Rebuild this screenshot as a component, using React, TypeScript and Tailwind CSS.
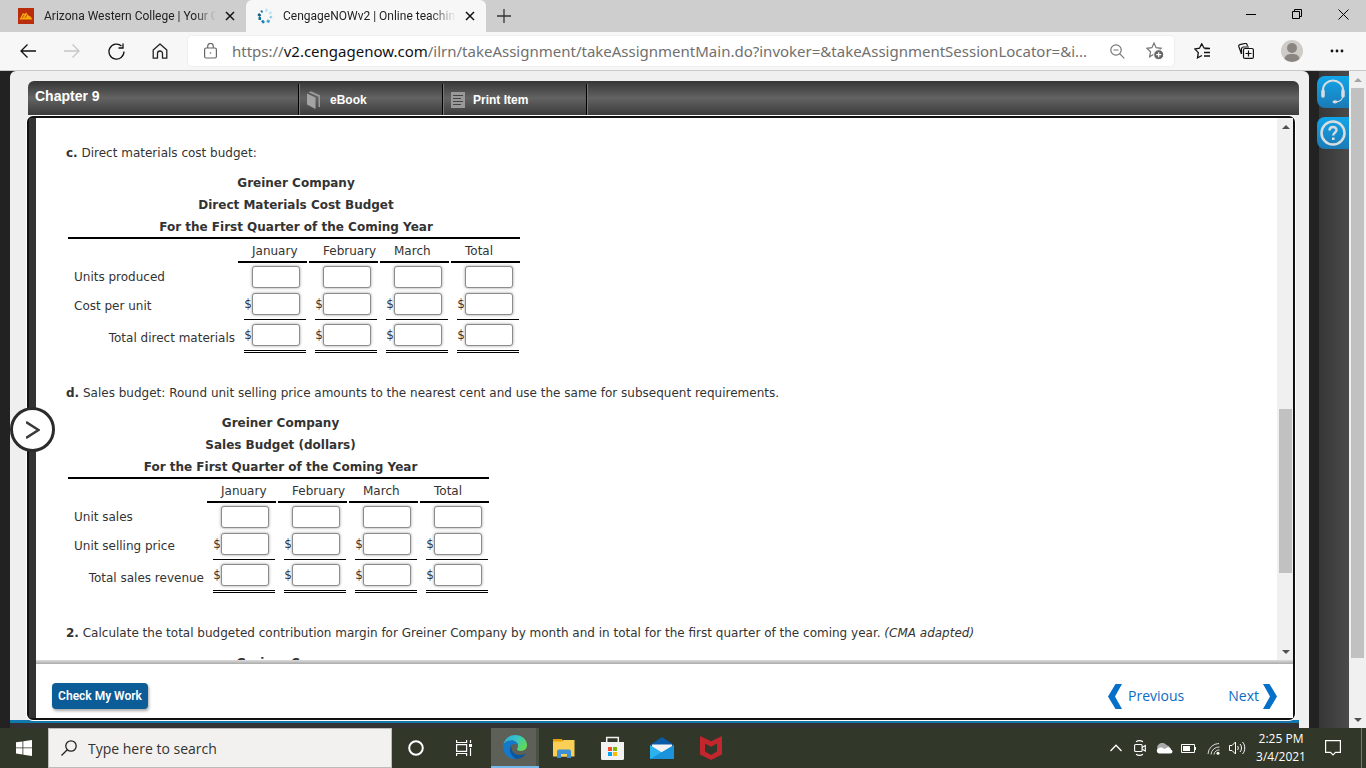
import React from 'react';

const MONTHS = ['January', 'February', 'March', 'Total'];

interface BudgetRow {
  label: string;
  dollar?: boolean;
  kind: 'plain' | 'subtotal' | 'total';
}

interface BudgetTableProps {
  title: string;
  labelWidth: string;
  rows: BudgetRow[];
}

const CELL_STYLES = {
  plain: 'pt-[3px] pb-0.5',
  subtotal: 'pt-[3px] pb-1 border-b border-black',
  total: 'py-1 border-b-[3px] border-double border-black',
};

const LABEL_STYLES = {
  plain: 'text-left pl-1.5',
  subtotal: 'text-left pl-1.5 pt-0.5',
  total: 'text-right pr-px pt-0.5',
};

function BudgetTable({ title, labelWidth, rows }: BudgetTableProps) {
  return (
    <table className="mt-2 border-separate border-spacing-x-0.5 border-spacing-y-0 table-fixed w-max">
      <colgroup>
        <col className={labelWidth} />
        {MONTHS.map((m) => (
          <col key={m} className="w-[69px]" />
        ))}
      </colgroup>
      <thead>
        <tr>
          <th colSpan={5} className="p-0 pl-1 border-b-2 border-black text-center font-bold leading-[22px]">
            <div className="h-[65px]">
              <div>Greiner Company</div>
              <div>{title}</div>
              <div>For the First Quarter of the Coming Year</div>
            </div>
          </th>
        </tr>
        <tr>
          <td className="p-0" />
          {MONTHS.map((m) => (
            <th key={m} scope="col" className="p-0 pt-0.5 pl-3.5 border-b-2 border-black text-left font-normal leading-5">
              {m}
            </th>
          ))}
        </tr>
      </thead>
      <tbody>
        {rows.map((row) => (
          <tr key={row.label}>
            <th scope="row" className={`p-0 font-normal whitespace-nowrap ${LABEL_STYLES[row.kind]}`}>
              {row.label}
            </th>
            {MONTHS.map((m) => (
              <td key={m} className="p-0 pl-1.5 pr-px align-top">
                <label className={`flex items-center ${CELL_STYLES[row.kind]}`}>
                  <span className="w-2 text-right leading-[22px]">{row.dollar ? '$' : ''}</span>
                  <input
                    type="text"
                    aria-label={`${row.label} ${m}`}
                    className="w-12 h-[22px] px-1 bg-white border border-[#8c8c8c] rounded-[3px] shadow-[0_0_3px_#999] outline-none"
                  />
                </label>
              </td>
            ))}
          </tr>
        ))}
      </tbody>
    </table>
  );
}

function CloseX({ size = 10 }: { size?: number }) {
  return (
    <svg width={size} height={size} viewBox="0 0 10 10" stroke="#111" strokeWidth="1.5" fill="none">
      <path d="M1 1l8 8M9 1L1 9" />
    </svg>
  );
}

function TabStrip() {
  return (
    <header className="h-8 shrink-0 flex bg-[#cecece] text-xs text-[#222] font-['Roboto','Noto_Sans',sans-serif]">
      <div className="w-[246px] flex items-center pl-[18px] pr-1.5">
        <svg width="16" height="16" viewBox="0 0 16 16" className="shrink-0">
          <rect width="16" height="16" fill="#b92d0c" />
          <path d="M1.5 11.5L5 5l1.500 1L8 4.500l3 3.500 1.500.5 2 3z" fill="#f6a90c" />
          <path d="M4 10l2-3M7 10l2-3.500" stroke="#b92d0c" strokeWidth=".8" />
        </svg>
        <span className="ml-2.5 flex-1 overflow-hidden whitespace-nowrap [mask-image:linear-gradient(to_right,black_88%,transparent)]">
          Arizona Western College | Your C
        </span>
        <button aria-label="Close tab" className="w-5 h-5 ml-1 flex items-center justify-center">
          <CloseX />
        </button>
      </div>
      <div className="w-60 flex items-center pl-[11px] pr-1.5 bg-[#f7f7f7] rounded-t-md">
        <svg width="16" height="16" viewBox="0 0 16 16" className="shrink-0" fill="none" strokeWidth="3">
          <path d="M8.500 2.200L10.500 2.200" stroke="#b5ddf0" />
          <path d="M12.500 3.800L14 6" stroke="#c5e6f5" />
          <path d="M13.200 8.200L14.500 10" stroke="#8ccbe8" strokeWidth="2.500" />
          <path d="M10 12.500L12.500 14" stroke="#4aa6d5" />
          <path d="M5 14.500L7 12.800" stroke="#1583bb" />
          <path d="M1.500 10.500L4 10.500" stroke="#10739f" />
          <path d="M1.200 6L3.500 8" stroke="#0d5f8c" strokeWidth="2.500" />
          <path d="M4 2.500L5.500 4.500" stroke="#2b7fae" strokeWidth="2" />
        </svg>
        <span className="ml-2.5 flex-1 overflow-hidden whitespace-nowrap [mask-image:linear-gradient(to_right,black_85%,transparent)]">
          CengageNOWv2 | Online teachin
        </span>
        <button aria-label="Close tab" className="w-5 h-5 ml-1 flex items-center justify-center">
          <CloseX />
        </button>
      </div>
      <button aria-label="New tab" className="w-9 flex items-center justify-center">
        <svg width="14" height="14" viewBox="0 0 14 14" stroke="#333" strokeWidth="1.300">
          <path d="M7 0v14M0 7h14" />
        </svg>
      </button>
      <div className="ml-auto flex">
        <button aria-label="Minimize" className="w-[46px] flex items-center justify-center pb-1">
          <svg width="10" height="10" viewBox="0 0 10 10" stroke="#000">
            <path d="M0 5.500h10" />
          </svg>
        </button>
        <button aria-label="Restore" className="w-[46px] flex items-center justify-center pb-1">
          <svg width="10" height="10" viewBox="0 0 10 10" stroke="#000" fill="none">
            <path d="M.5 2.500h7v7h-7zM2.500 2.500v-2h7v7h-2" />
          </svg>
        </button>
        <button aria-label="Close" className="w-[46px] flex items-center justify-center pb-1">
          <svg width="11" height="11" viewBox="0 0 11 11" stroke="#000">
            <path d="M.5.5l10 10M10.500.5l-10 10" />
          </svg>
        </button>
      </div>
    </header>
  );
}

function Toolbar() {
  return (
    <nav className="h-[39px] shrink-0 flex items-center bg-[#f7f7f7] border-b border-[#c8c8c8] pl-1.5 pr-[7px]">
      <button aria-label="Back" className="w-11 flex justify-center">
        <svg width="16" height="14" viewBox="0 0 16 14" fill="none" stroke="#111" strokeWidth="1.300">
          <path d="M16 7H1M7.500.5L1 7l6.500 6.500" />
        </svg>
      </button>
      <button aria-label="Forward" className="w-11 flex justify-center">
        <svg width="16" height="14" viewBox="0 0 16 14" fill="none" stroke="#c6c6c6" strokeWidth="1.300">
          <path d="M0 7h15M8.500.5L15 7l-6.500 6.500" />
        </svg>
      </button>
      <button aria-label="Refresh" className="w-11 flex justify-center">
        <svg width="17" height="17" viewBox="0 0 17 17" fill="none" stroke="#111" strokeWidth="1.300">
          <path d="M16 8.500A7.500 7.500 0 1 1 13.500 3M15 .5V5h-4.500" />
        </svg>
      </button>
      <button aria-label="Home" className="w-11 flex justify-center">
        <svg width="16" height="16" viewBox="0 0 16 16" fill="none" stroke="#222" strokeWidth="1.300" strokeLinejoin="round">
          <path d="M1.200 7L8 1l6.800 6v8.200h-4.300V10.500a2.500 2.500 0 0 0-5 0v4.700H1.200z" />
        </svg>
      </button>
      <div className="ml-1.5 flex-1 min-w-0 h-[30px] flex items-center bg-white rounded shadow-[0_0_2px_#ddd] pl-4 pr-2.5">
        <svg width="13" height="16" viewBox="0 0 13 16" fill="none" stroke="#666" strokeWidth="1.200" className="shrink-0">
          <rect x=".6" y="5" width="11.800" height="10" rx="1.500" />
          <path d="M3.700 5V3.200a2.800 2.800 0 0 1 5.600 0V5" />
          <circle cx="6.500" cy="10" r=".8" fill="#666" stroke="none" />
        </svg>
        <div className="ml-[15px] flex-1 min-w-0 whitespace-nowrap text-[15px] text-[#707070] font-['Noto_Sans',sans-serif]">
          https://<span className="text-[#111]">v2.cengagenow.com</span>
          /ilrn/takeAssignment/takeAssignmentMain.do?invoker=&amp;takeAssignmentSessionLocator=&amp;i...
        </div>
        <button aria-label="Zoom out" className="ml-4">
          <svg width="15" height="15" viewBox="0 0 15 15" fill="none" stroke="#777" strokeWidth="1.200">
            <circle cx="6" cy="6" r="5.200" />
            <path d="M3.500 6h5M9.800 9.800l4.500 4.500" />
          </svg>
        </button>
        <button aria-label="Add to favorites" className="ml-[21px]">
          <svg width="18" height="18" viewBox="0 0 18 18" fill="none">
            <path d="M8 1l2.100 4.700 5 .6-3.700 3.400 1 5.100L8 12.300l-4.400 2.500 1-5.100L.9 6.300l5-.6z" stroke="#777" strokeWidth="1.200" />
            <circle cx="12.700" cy="12.700" r="5" fill="#666" stroke="#fff" />
            <path d="M12.700 10.200v5M10.200 12.700h5" stroke="#fff" strokeWidth="1.200" />
          </svg>
        </button>
      </div>
      <button aria-label="Favorites" className="ml-1.5 w-11 flex justify-center">
        <svg width="17" height="16" viewBox="0 0 17 16" fill="none" stroke="#111" strokeWidth="1.300">
          <path d="M15.500 5.500L10 5 7.700.8 5.500 5.200.8 6l3.500 3.600-.8 5.200L8 12.500M10.500 5.500H16M10 9.500h6M10 13h6" />
        </svg>
      </button>
      <button aria-label="Collections" className="w-11 flex justify-center">
        <svg width="16" height="16" viewBox="0 0 16 16" fill="none" stroke="#111" strokeWidth="1.200">
          <path d="M3.500 11L.8 3.500a1.500 1.500 0 0 1 1-1.900L7 .5a1.500 1.500 0 0 1 2 1l.5 1.500M3.500 11V6a2 2 0 0 1 2-2H11" />
          <rect x="5.500" y="5.500" width="9.900" height="9.900" rx="1.500" fill="#f7f7f7" />
          <path d="M10.500 7.500v6M7.500 10.500h6" />
        </svg>
      </button>
      <button aria-label="Profile" className="w-[47px] flex justify-center">
        <svg width="22" height="22" viewBox="0 0 22 22">
          <circle cx="11" cy="11" r="11" fill="#cfccc8" />
          <circle cx="11" cy="8" r="5" fill="#8a8580" />
          <path d="M3.500 19c.5-4 3.500-5 7.500-5s7 1 7.500 5A11 11 0 0 1 3.500 19z" fill="#8a8580" />
        </svg>
      </button>
      <button aria-label="Settings and more" className="w-11 flex justify-center">
        <svg width="14" height="4" viewBox="0 0 14 4" fill="#111">
          <circle cx="2" cy="2" r="1.400" />
          <circle cx="7" cy="2" r="1.400" />
          <circle cx="12" cy="2" r="1.400" />
        </svg>
      </button>
    </nav>
  );
}

function Arrow({ up = false, color = '#505050' }: { up?: boolean; color?: string }) {
  return (
    <span className="h-[17px] shrink-0 flex items-center justify-center">
      <svg width="8" height="4" viewBox="0 0 8 4" fill={color}>
        <path d={up ? 'M0 4l4-4 4 4z' : 'M0 0l4 4 4-4z'} />
      </svg>
    </span>
  );
}

function AssignmentHeader() {
  const divider = 'border-l border-black shadow-[inset_1px_0_0_#777]';
  return (
    <div className="h-[34px] mr-px ml-px shrink-0 flex rounded-t-md bg-linear-to-b from-[#363636] via-[#636363] to-[#3c3c3c] text-white font-bold font-['Liberation_Sans',Arial,sans-serif]">
      <h1 className="w-[270px] pl-[7px] pt-1.5 text-sm leading-[18px]">Chapter 9</h1>
      <button className={`mt-[3px] w-36 flex items-center gap-2.5 pl-2 text-xs ${divider}`}>
        <svg width="13" height="18" viewBox="0 0 13 18">
          <path d="M0 2.500l8.500 4V18L0 13.500z" fill="#a3a3a3" />
          <path d="M1.500 1.500L4 .3l9 4V16h-1.500V5.800L3.500 2.300z" fill="#999" />
        </svg>
        eBook
      </button>
      <button className={`mt-[3px] w-36 flex items-center gap-2 pl-2 text-xs ${divider}`}>
        <svg width="14" height="16" viewBox="0 0 14 16">
          <rect width="14" height="16" fill="#999" />
          <path d="M2 3.500h10M2 6.500h8M2 9.500h10M2 12.500h8" stroke="#444" />
        </svg>
        Print Item
      </button>
      <span className={`mt-[3px] w-2 ${divider}`} />
    </div>
  );
}

function Questions() {
  return (
    <main className="flex-1 min-w-0 overflow-hidden pt-6 pl-[30px] text-xs leading-[22px] text-[#333] font-['DejaVu_Sans',Verdana,sans-serif]">
      <p>
        <b>c.</b> Direct materials cost budget:
      </p>
      <BudgetTable
        title="Direct Materials Cost Budget"
        labelWidth="w-[168px]"
        rows={[
          { label: 'Units produced', kind: 'plain' },
          { label: 'Cost per unit', dollar: true, kind: 'subtotal' },
          { label: 'Total direct materials', dollar: true, kind: 'total' },
        ]}
      />
      <p className="mt-[29px]">
        <b>d.</b> Sales budget: Round unit selling price amounts to the nearest cent and use the same for subsequent
        requirements.
      </p>
      <BudgetTable
        title="Sales Budget (dollars)"
        labelWidth="w-[137px]"
        rows={[
          { label: 'Unit sales', kind: 'plain' },
          { label: 'Unit selling price', dollar: true, kind: 'subtotal' },
          { label: 'Total sales revenue', dollar: true, kind: 'total' },
        ]}
      />
      <p className="mt-[29px]">
        <b>2.</b> Calculate the total budgeted contribution margin for Greiner Company by month and in total for the
        first quarter of the coming year. <i>(CMA adapted)</i>
      </p>
      <div className="mt-2 w-[458px] text-center font-bold">Greiner Company</div>
    </main>
  );
}

function Assignment() {
  return (
    <div className="flex-1 min-w-0 flex flex-col bg-[#efefef] rounded-t-md">
      <div className="flex-1 min-h-0 flex flex-col pt-2.5 pl-[17px] pr-[9px]">
        <AssignmentHeader />
        <div className="relative mr-[5px] flex-1 min-h-0 mt-px flex flex-col bg-white border-2 border-[#111] rounded-md shadow-[0_0_0_1px_#fff]">
          <div className="flex-1 min-h-0 flex border-l-[7px] border-[#333]">
            <Questions />
            <div className="w-4 shrink-0 flex flex-col pl-0.5 bg-[#f0f0f0]" aria-hidden="true">
              <Arrow up />
              <span className="grow-[274]" />
              <span className="grow-[164] mr-px bg-[#c1c1c1]" />
              <span className="grow-[70]" />
              <Arrow />
            </div>
          </div>
          <footer className="shrink-0 border-l-[7px] border-[#333]">
            <div className="h-1 bg-linear-to-b from-[#ddd] to-[#aaa]" />
            <div className="h-[54px] pt-2.5 pl-4 pr-4 flex items-center bg-white font-['Open_Sans',sans-serif]">
              <button className="h-[26px] w-24 rounded bg-[#0b5c97] text-white text-xs font-semibold font-['Roboto',sans-serif] whitespace-nowrap shadow-[1px_2px_3px_#aaa]">
                Check My Work
              </button>
              <a href="#previous" className="ml-auto flex items-center gap-1.5 text-sm text-[#0a6cc4]">
                <svg width="14" height="25" viewBox="0 0 14 25" fill="#0570c9">
                  <path d="M7.500 0H14L7 12.500 14 25H7.500L0 12.500z" />
                </svg>
                Previous
              </a>
              <a href="#next" className="ml-11 flex items-center gap-1 text-sm text-[#0a6cc4]">
                Next
                <svg width="14" height="25" viewBox="0 0 14 25" fill="#0570c9">
                  <path d="M6.500 0H0l7 12.500L0 25h6.500L14 12.500z" />
                </svg>
              </a>
            </div>
          </footer>
          <button
            aria-label="Show panel"
            className="absolute -left-[19px] top-[289px] w-[45px] h-[45px] rounded-full border-[3px] border-[#2b2b2b] bg-white flex items-center justify-center"
          >
            <svg width="14" height="18" viewBox="0 0 14 18" fill="none" stroke="#3a3a3a" strokeWidth="2.500">
              <path d="M0 1l12.500 8L0 17" />
            </svg>
          </button>
        </div>
      </div>
      <div className="h-2 mr-2.5 shrink-0 bg-[#333] border-t-[3px] border-[#1378ad]" />
    </div>
  );
}

function SideRail() {
  const box = 'w-8 h-8 -ml-0.5 flex items-center justify-center rounded-l-lg bg-linear-to-b from-[#10a5ea] to-[#1a7ab5]';
  return (
    <aside className="w-10 shrink-0 border-l-10 border-[#222] bg-linear-to-r from-[#363636] to-[#4b4b4b] pt-[5px] flex flex-col gap-[9px]">
      <button aria-label="Support" className={box}>
        <svg width="26" height="26" viewBox="0 0 26 26" fill="none" stroke="#d9dde0">
          <path d="M3 13V11a10 9.500 0 0 1 20 0v2" strokeWidth="2" />
          <path d="M3 12v5M23 12v5" strokeWidth="3.500" strokeLinecap="round" />
          <path d="M22.500 18c-.5 3-3 4.500-6 4.800" strokeWidth="1.200" />
          <ellipse cx="15" cy="22.800" rx="2.500" ry="1.600" fill="#d9dde0" stroke="none" />
        </svg>
      </button>
      <button aria-label="Help" className={box}>
        <svg width="26" height="26" viewBox="0 0 26 26" fill="none" stroke="#d9dde0">
          <circle cx="13" cy="13" r="11.500" strokeWidth="2.500" />
          <path d="M9.500 10.500c0-4.500 7-4.500 7-.5 0 2.500-3.300 2.700-3.300 5.500" strokeWidth="2.400" />
          <path d="M12 17.500h2.600V20H12z" fill="#d9dde0" stroke="none" />
        </svg>
      </button>
    </aside>
  );
}

function PageScrollbar() {
  return (
    <div className="w-[17px] shrink-0 flex flex-col bg-[#f0f0f0]" aria-hidden="true">
      <Arrow up color="#a3a3a3" />
      <span className="grow-[570] mx-0.5 bg-[#c1c1c1]" />
      <span className="grow-[53]" />
      <Arrow />
    </div>
  );
}

function Taskbar() {
  const item = 'w-[49px] flex items-center justify-center';
  return (
    <footer className="h-10 shrink-0 flex bg-[#313729] text-white">
      <button aria-label="Start" className="w-12 flex items-center justify-center">
        <svg width="16" height="16" viewBox="0 0 16 16" fill="#fff">
          <path d="M0 2.300l6.500-.9v6.100H0zM7.300 1.300L16 0v7.500H7.300zM0 8.300h6.500v6.200L0 13.600zM7.300 8.300H16V16l-8.700-1.300z" />
        </svg>
      </button>
      <label className="w-[344px] flex items-center pl-3 bg-[#f2f1f0] border border-[#bbb]">
        <svg width="16" height="16" viewBox="0 0 16 16" fill="none" stroke="#222" strokeWidth="1.300">
          <circle cx="10" cy="6" r="5.200" />
          <path d="M6.300 9.700L.5 15.500" />
        </svg>
        <input
          type="text"
          aria-label="Search"
          placeholder="Type here to search"
          className="ml-[11px] pt-0.5 flex-1 min-w-0 bg-transparent text-sm text-[#333] placeholder:text-[#333] outline-none"
        />
      </label>
      <button aria-label="Cortana" className="w-12 flex items-center justify-center">
        <svg width="16" height="16" viewBox="0 0 16 16" fill="none" stroke="#fff" strokeWidth="2">
          <circle cx="8" cy="8" r="6.800" />
        </svg>
      </button>
      <button aria-label="Task view" className="w-12 flex items-center justify-center">
        <svg width="16" height="16" viewBox="0 0 16 16" fill="none" stroke="#fff" strokeWidth="1.200">
          <path d="M.6 0v2.500h10V0M.6 16v-2.500h10V16M.6 4.600h10v6.800H.6zM14.500 0v3M14.500 8v8" />
          <path d="M13 4h3v3h-3z" fill="#fff" stroke="none" />
        </svg>
      </button>
      <button
        aria-label="Microsoft Edge"
        className="ml-[3px] w-12 flex items-center justify-center bg-[#5c6056] border-b-2 border-[#76b9ed] shadow-[inset_-3px_0_0_#4b5044]"
      >
        <svg width="24" height="24" viewBox="0 0 24 24">
          <defs>
            <linearGradient id="edgeTop" x1="0" y1="0" x2="1" y2="0.500">
              <stop offset="0" stopColor="#2aa6dc" />
              <stop offset="0.500" stopColor="#35c2cf" />
              <stop offset="1" stopColor="#5fd95a" />
            </linearGradient>
          </defs>
          <path d="M.3 10C1.500 4 6.300 0 12 0c7 0 12 4.800 12 10.300 0 3.500-2.700 5.700-6 5.700-2.500 0-4-1-4-2 0-.6 1-1 1-3 0-3-3-5.500-6.500-5.500C4.500 5.500 1.500 7.500.3 10z" fill="url(#edgeTop)" />
          <path d="M.2 10.500C1.500 7.500 4.700 5.500 8.500 5.500c3 0 6.500 2 6.500 5-1-1.200-2-1.500-3.500-1.500C8 9 6 12.500 7 16c1 3.500 4 6.500 8 7.500C7 25.500-.5 19.500.2 10.500z" fill="#1379cc" />
          <path d="M9.500 9.600C7 12 8.500 20 17 20c2 0 3.500-.5 4.700-1 .4-.2.8.2.500.6C20 22.500 17 24 14 24 8.500 22.500 4 14 9.500 9.600z" fill="#0c56a0" />
        </svg>
      </button>
      <button aria-label="File Explorer" className={item}>
        <svg width="22" height="19" viewBox="0 0 22 19">
          <path d="M0 0h9l1.500 3H0z" fill="#e3a008" />
          <path d="M0 2.500h9L10.500 1H21.500v16.500H0z" fill="#fbcf56" />
          <path d="M4 19v-6.500a2 2 0 0 1 2-2h10a2 2 0 0 1 2 2V19h-4v-4H8v4z" fill="#3d8fd6" />
          <path d="M8 15h6v2.500H8z" fill="#fbcf56" />
        </svg>
      </button>
      <button aria-label="Microsoft Store" className={item}>
        <svg width="23" height="24" viewBox="0 0 23 24">
          <path d="M5.700 7V1.500h11.600V7" fill="none" stroke="#f2f2f2" strokeWidth="1.500" />
          <path d="M0 6h23v16.500a1.500 1.500 0 0 1-1.500 1.500h-20A1.500 1.500 0 0 1 0 22.500z" fill="#f2f2f2" />
          <path d="M7 11h4v4H7z" fill="#f25022" />
          <path d="M12 11h4v4h-4z" fill="#7fba00" />
          <path d="M7 16h4v4H7z" fill="#00a4ef" />
          <path d="M12 16h4v4h-4z" fill="#ffb900" />
        </svg>
      </button>
      <button aria-label="Mail" className={item}>
        <svg width="24" height="22" viewBox="0 0 24 22">
          <path d="M0 8l12-8 12 8z" fill="#0a5ca8" />
          <path d="M2 7.500h20v8H2z" fill="#f4f4f4" />
          <path d="M0 8l12 7.500L24 8v14H0z" fill="#2cb2ef" />
          <path d="M0 22L24 8v14z" fill="#1a93dc" />
        </svg>
      </button>
      <button aria-label="McAfee" className={item}>
        <svg width="22" height="24" viewBox="0 0 22 24">
          <path d="M0 0l11 5.200L22 0v18.500L11 24 0 18.500z" fill="#c4262e" />
          <path d="M5 7.500l6 3.200 6-3.200v8L11 19l-6-3.500z" fill="#313729" />
        </svg>
      </button>
      <div className="ml-auto flex items-center">
        <button aria-label="Show hidden icons" className="w-6 flex justify-center">
          <svg width="12" height="8" viewBox="0 0 12 8" fill="none" stroke="#fff" strokeWidth="1.300">
            <path d="M.5 7L6 1.200 11.500 7" />
          </svg>
        </button>
        <button aria-label="Meet now" className="w-6 flex justify-center">
          <svg width="12" height="16" viewBox="0 0 12 16" fill="none" stroke="#fff" strokeWidth="1.100">
            <rect x=".6" y="4.500" width="7.500" height="7" rx="1" />
            <path d="M8 7.500l3.300-2v5.500L8 9M2 1.800c2-1.300 5-1.300 7 0M2 14.200c2 1.300 5 1.300 7 0" />
          </svg>
        </button>
        <button aria-label="OneDrive" className="w-6 flex justify-center">
          <svg width="17" height="11" viewBox="0 0 17 11">
            <path d="M2 7a5 4.500 0 0 1 8.500-5A4 4 0 0 1 14 5z" fill="#aaa" />
            <path d="M3 10.500a2.800 2.800 0 0 1 0-5.500c1.500-.8 3.500-.5 5 1l4-1.800c2 0 3 1 3 2.500 2.500.8 1.500 3.800-.5 3.800z" fill="#fff" />
          </svg>
        </button>
        <button aria-label="Battery" className="w-[25px] flex justify-center">
          <svg width="15" height="9" viewBox="0 0 15 9" fill="none" stroke="#fff">
            <path d="M.5.5h13v8H.5z" />
            <path d="M2 2h7v5H2zM14 3h1v3h-1z" fill="#fff" stroke="none" />
          </svg>
        </button>
        <button aria-label="Network" className="w-6 flex justify-center">
          <svg width="13" height="13" viewBox="0 0 13 13" fill="none" stroke="#ddd">
            <path d="M1 12A11 11 0 0 1 12 1.500M4 12.500A8 8 0 0 1 12.500 5M7 12.500A5 5 0 0 1 12.500 8" />
            <circle cx="11" cy="11.200" r="1.500" fill="#fff" stroke="none" />
          </svg>
        </button>
        <button aria-label="Volume" className="w-6 flex justify-center">
          <svg width="17" height="14" viewBox="0 0 17 14" fill="none" stroke="#fff">
            <path d="M.5 4.500h2.500L6.500 1v12L3 9.500H.5zM8.500 5c1 1 1 3 0 4M11 3c2 2 2 6 0 8M13.500 1c3 3 3 9 0 12" />
          </svg>
        </button>
        <div className="w-16 text-center text-xs leading-[18px] whitespace-nowrap">
          <div>2:25 PM</div>
          <div>3/4/2021</div>
        </div>
        <button aria-label="Notifications" className="w-10 flex justify-center">
          <svg width="16" height="16" viewBox="0 0 16 16" fill="none" stroke="#fff" strokeWidth="1.200">
            <path d="M.6.6h14.800v11.800h-4.900L8 15l-2.500-2.600H.6z" />
          </svg>
        </button>
        <span className="w-[13px] h-10 flex justify-end">
          <span className="w-[5px] border-l border-[#777]" />
        </span>
      </div>
    </footer>
  );
}

export default function App() {
  return (
    <div className="h-screen flex flex-col overflow-hidden font-['Open_Sans','Noto_Sans',sans-serif]">
      <TabStrip />
      <Toolbar />
      <div className="flex-1 min-h-0 flex bg-[#222]">
        <div className="w-2.5 shrink-0" />
        <Assignment />
        <SideRail />
        <PageScrollbar />
      </div>
      <Taskbar />
    </div>
  );
}
